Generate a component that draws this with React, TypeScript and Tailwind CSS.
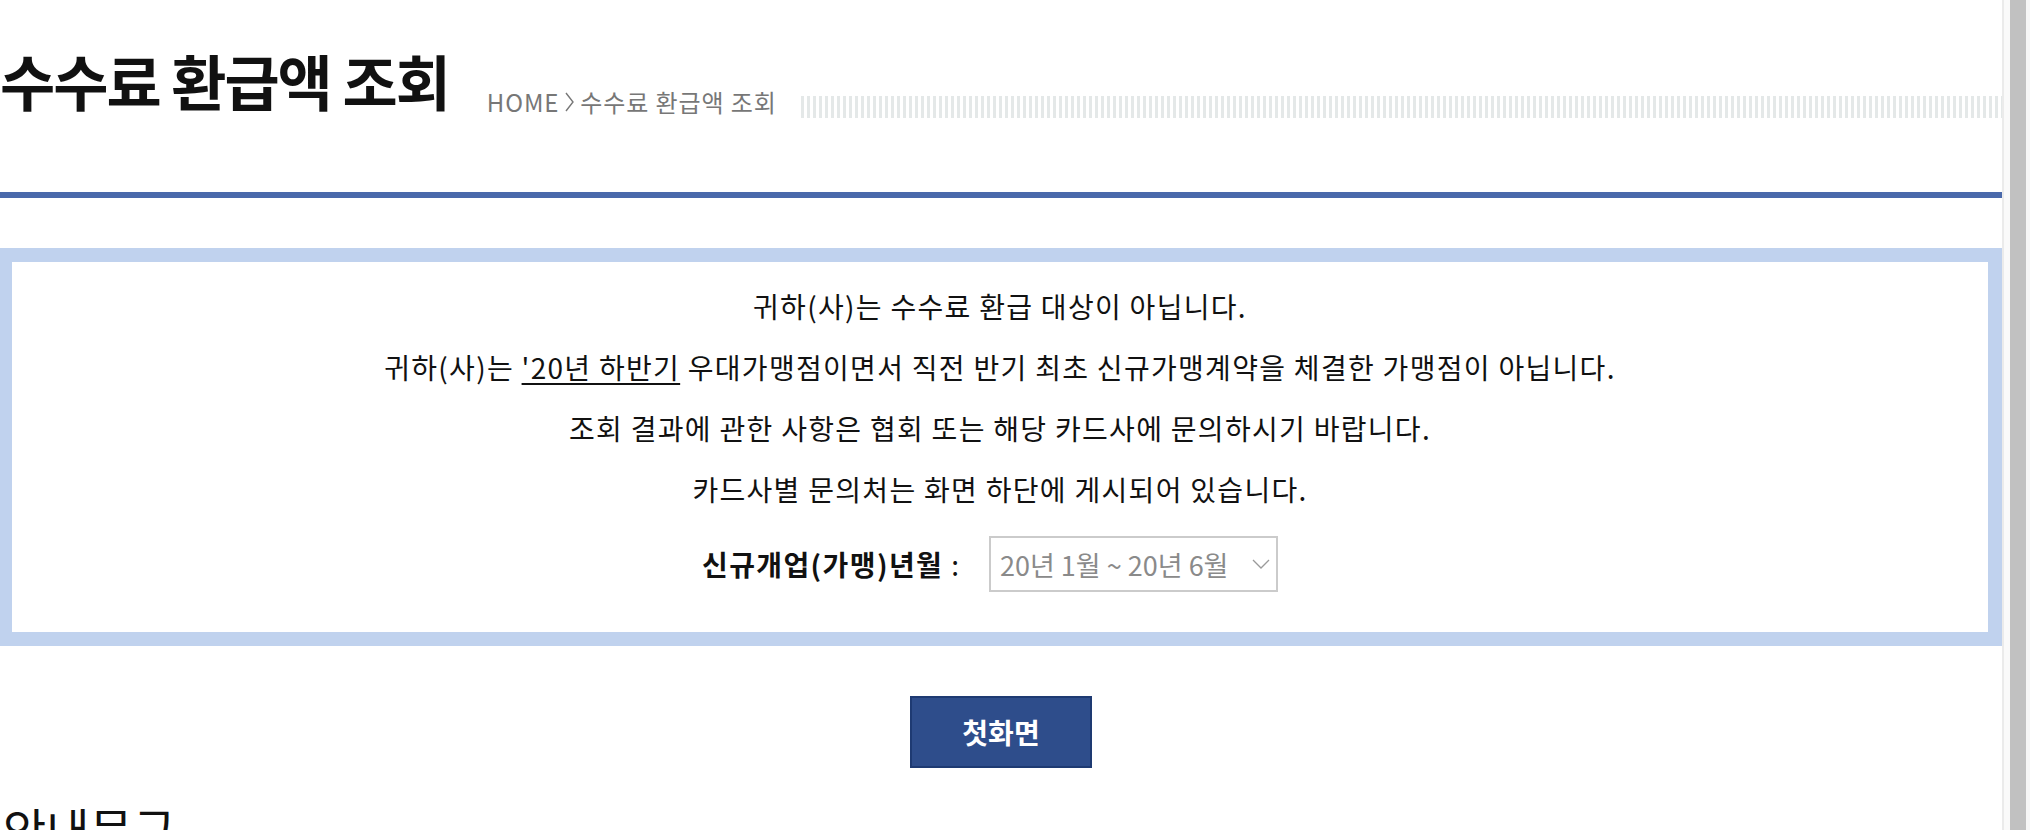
import React from "react";

const FONT = "font-['Noto_Sans_CJK_KR','Noto_Sans',sans-serif]";

function Breadcrumb() {
  return (
    <div className="mt-[87px] ml-[38px] flex items-center gap-[6px] text-[24px] leading-[30px] tracking-[0.9px] text-[#777] whitespace-nowrap">
      <span>HOME</span>
      <svg width="9" height="20" viewBox="0 0 9 20" aria-hidden="true">
        <path d="M1 1l7 9-7 9" fill="none" stroke="#777" strokeWidth="1.4" />
      </svg>
      <span>수수료 환급액 조회</span>
    </div>
  );
}

function PeriodSelect() {
  return (
    <div className="flex h-[56px] w-[289px] items-center justify-between border-2 border-[#cbcbcb] bg-white pl-[9px] pr-[6px]">
      <span className="text-[27px] leading-none text-[#8a8a8a]">20년 1월 ~ 20년 6월</span>
      <svg width="18" height="11" viewBox="0 0 18 11" aria-hidden="true">
        <path d="M1 1l8 8 8-8" fill="none" stroke="#9a9a9a" strokeWidth="1.3" />
      </svg>
    </div>
  );
}

export default function App() {
  return (
    <div className={`${FONT} flex h-[830px] w-[2030px] overflow-hidden bg-white text-[#111]`}>
      <div className="w-[2002px] shrink-0">
        <header className="flex h-[192px] items-start">
          <h1 className="mt-[50px] text-[60px] font-bold leading-none tracking-[-2px] whitespace-nowrap">
            수수료 환급액 조회
          </h1>
          <Breadcrumb />
          <div className="ml-[24px] mt-[96px] h-[22px] flex-1 bg-[repeating-linear-gradient(90deg,#e4e8e8_0px,#e4e8e8_3px,#ffffff_3px,#ffffff_6px)]" />
        </header>
        <div className="h-[6px] bg-[#4a69ab]" />

        <section className="mt-[50px] border-[14px] border-l-[12px] border-[#c0d2ee] pt-[14px] pb-[40px]">
          <div className="flex flex-col items-center text-[28px] leading-[61px] tracking-[1.3px]">
            <p>귀하(사)는 수수료 환급 대상이 아닙니다.</p>
            <p>
              귀하(사)는 <span className="underline underline-offset-4">'20년 하반기</span> 우대가맹점이면서 직전 반기 최초
              신규가맹계약을 체결한 가맹점이 아닙니다.
            </p>
            <p>조회 결과에 관한 사항은 협회 또는 해당 카드사에 문의하시기 바랍니다.</p>
            <p>카드사별 문의처는 화면 하단에 게시되어 있습니다.</p>
          </div>
          <div className="mt-[16px] flex items-center justify-center pr-[20px]">
            <span className="text-[28px] font-bold leading-none tracking-[1.4px]">신규개업(가맹)년월</span>
            <span className="ml-[8px] mr-[30px] text-[28px] leading-none">:</span>
            <PeriodSelect />
          </div>
        </section>

        <div className="mt-[50px] flex justify-center">
          <button className="h-[72px] w-[182px] border-2 border-[#1e3a72] bg-[#2e4d8b] text-[28px] font-bold text-white">
            첫화면
          </button>
        </div>

        <h2 className="mt-[36px] pl-[3px] text-[47px] leading-none">안내문구</h2>
      </div>

      <div className="flex h-full flex-1">
        <div className="w-[2px] bg-[#ebebeb]" />
        <div className="w-[6px] bg-[#fafafa]" />
        <div className="w-[16px] bg-[#c1c1c1]" />
        <div className="flex-1 bg-[#f6f6f6]" />
      </div>
    </div>
  );
}
